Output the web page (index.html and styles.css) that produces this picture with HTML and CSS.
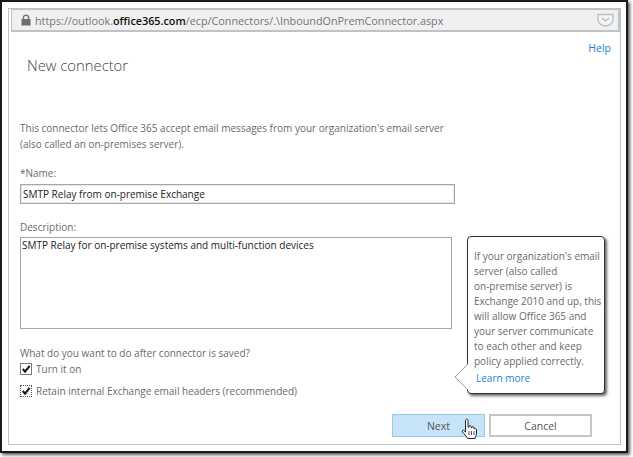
FILE: index.html
```html
<!DOCTYPE html>
<html lang="en">
<head>
<meta charset="utf-8">
<title>New connector</title>
<link rel="stylesheet" href="styles.css">
</head>
<body>
<div class="window">
  <div class="frame">
    <div class="addressbar">
      <svg class="lock" width="10" height="12" viewBox="0 0 10 12"><path d="M2.500 5.500V3.600a2.500 2.500 0 0 1 5 0v1.900" fill="none" stroke="#6e6e6e" stroke-width="1.400"/><rect x="0.500" y="5" width="9" height="6.500" fill="#6e6e6e"/></svg>
      <span class="url">https://outlook.<b>office365.com</b>/ecp/Connectors/.\InboundOnPremConnector.aspx</span>
      <svg class="pocket" width="17" height="14" viewBox="0 0 17 14"><path d="M1 1.500h15v5a7.500 6.500 0 0 1-15 0z" fill="#f4f4f4" stroke="#bdbdbd" stroke-width="1.300"/><path d="M5 5l3.500 3L12 5" fill="none" stroke="#bdbdbd" stroke-width="1.500"/></svg>
    </div>
    <div class="content">
      <div class="helprow"><a class="help">Help</a></div>
      <h1 class="title">New connector</h1>
      <p class="intro">This connector lets Office 365 accept email messages from your organization's email server<br>(also called an on-premises server).</p>
      <label class="label name-label">*Name:</label>
      <div class="input">SMTP Relay from on-premise Exchange</div>
      <label class="label desc-label">Description:</label>
      <div class="textarea">SMTP Relay for on-premise systems and multi-function devices</div>
      <p class="label question">What do you want to do after connector is saved?</p>
      <div class="check first"><span class="box"><svg width="10" height="10" viewBox="0 0 11 11"><path d="M2 5.500l2.500 3L9.500 2" fill="none" stroke="#111" stroke-width="2.200"/></svg></span>Turn it on</div>
      <div class="check"><span class="box dotted"><svg width="10" height="10" viewBox="0 0 11 11"><path d="M2 5.500l2.500 3L9.500 2" fill="none" stroke="#111" stroke-width="2.200"/></svg></span>Retain internal Exchange email headers (recommended)</div>
      <div class="buttons">
        <div class="btn next">Next</div>
        <div class="btn cancel">Cancel</div>
      </div>
    </div>
    <div class="tip">
      <svg class="tip-arrow" width="14" height="26" viewBox="0 0 14 26"><path d="M14 0L1 13l13 13" fill="#fff" stroke="#9a9a9a"/></svg>
      <p>If your organization's email<br>server (also called<br>on-premise server) is<br>Exchange 2010 and up, this<br>will allow Office 365 and<br>your server communicate<br>to each other and keep<br>policy applied correctly.</p>
      <a class="learn">Learn more</a>
    </div>
    <svg class="cursor" width="17" height="22" viewBox="0 0 17 22"><path d="M5 1.500c1-.8 2 0 2 1V9l1 .2V8c1-.8 2-.4 2 .5v1l1 .2V9c1-.6 2-.3 2 .6v1l.8.100c.9-.3 1.700.2 1.700 1v3.300c0 2-1 3-1.500 5.500H6.500C5.500 18 3 16 1.500 14c-.8-1 .2-2.200 1.200-1.700L4.500 14V2.500c0-.4.200-.8.500-1z" fill="#fff" stroke="#222" stroke-width="1"/><path d="M8 13v4M10.500 13v4M13 13v4" stroke="#222" stroke-width=".8"/></svg>
  </div>
</div>
</body>
</html>
```
FILE: styles.css
```css
* { box-sizing: border-box; }
html, body { margin: 0; padding: 0; background: #fff; }
body { width: 633px; height: 457px; overflow: hidden; font-family: "Open Sans", "Noto Sans", sans-serif; }
.window {
  width: 628px; height: 453px; padding: 6px 5px 6px 6px;
  background: #fff; border: 2px solid #1a1a1a;
  box-shadow: 2px 2px 3px #555;
}
.frame { position: relative; height: 100%; border: 1px solid #bcc3c9; display: flex; flex-direction: column; }
.addressbar {
  height: 23px; margin: 0 0 0 2px; padding: 0 4px 0 9px;
  display: flex; align-items: center; gap: 4px;
  background: #f0f0f0; border: 1px solid #bcc3c9; border-width: 1px 2px 2px 1px;
  font-size: 10.800px; color: #757575; white-space: nowrap;
}
.url { flex: 1; }
.url b { font-weight: 600; color: #111; }
.lock { flex: none; }
.content { flex: 1; padding: 0 0 0 11px; color: #666; font-size: 10px; }
.helprow { display: flex; justify-content: flex-end; padding: 9px 9px 0 0; height: 22px; }
.help { color: #1a7fd6; font-size: 10.500px; }
.title { margin: 1px 0 0 7px; font-size: 14.800px; font-weight: 300; color: #444; line-height: 20px; height: 20px; }
.intro { margin: 45px 0 0; line-height: 16px; font-size: 10px; color: #6a6a6a; }
.label { display: block; color: #6a6a6a; font-size: 10px; line-height: 14px; }
.name-label { margin-top: 14px; }
.input { width: 435px; height: 20px; margin-top: 4px; padding-left: 2px; border: 1px solid #a6a6a6; color: #222; font-size: 10px; line-height: 18px; box-shadow: inset 0 0 0 1px #e8e8e8; }
.desc-label { margin-top: 16px; }
.textarea { width: 432px; height: 92px; margin-top: 3px; padding-left: 1px; border: 1px solid #a6a6a6; color: #222; font-size: 10px; line-height: 14px; }
.question { margin: 17px 0 0; }
.check { display: flex; align-items: center; gap: 3px; height: 13px; font-size: 10px; color: #6a6a6a; }
.check.first { margin-top: 2px; }
.check + .check { margin-top: 9px; }
.box { width: 12px; height: 12px; border: 1px solid #777; background: #fff; display: flex; align-items: center; justify-content: center; flex: none; margin-right: 1px; }
.box.dotted { border: 1px dotted #555; }
.buttons { display: flex; gap: 4px; margin: 17px 0 0 372px; }
.btn { height: 23px; display: flex; align-items: center; justify-content: center; font-size: 10.500px; color: #555; border: 1px solid #aaa; }
.next { width: 93px; background: #c7e3f7; border-color: #9cc8ea; }
.cancel { width: 103px; background: #fff; border: 2px solid #c6c6c6; }
.tip {
  position: absolute; left: 458px; top: 227px; width: 138px; height: 158px;
  padding: 12px 2px 0 6px; background: #fff; border: 1px solid #333; border-radius: 4px;
  box-shadow: 2px 2px 3px #666; font-size: 10px; line-height: 15px; color: #6a6a6a; white-space: nowrap;
}
.tip p { margin: 0 0 2px; }
.learn { color: #1a7fd6; margin-left: 2px; }
.tip-arrow { position: absolute; left: -14px; top: 127px; }
.cursor { position: absolute; left: 452px; top: 409px; }
```
